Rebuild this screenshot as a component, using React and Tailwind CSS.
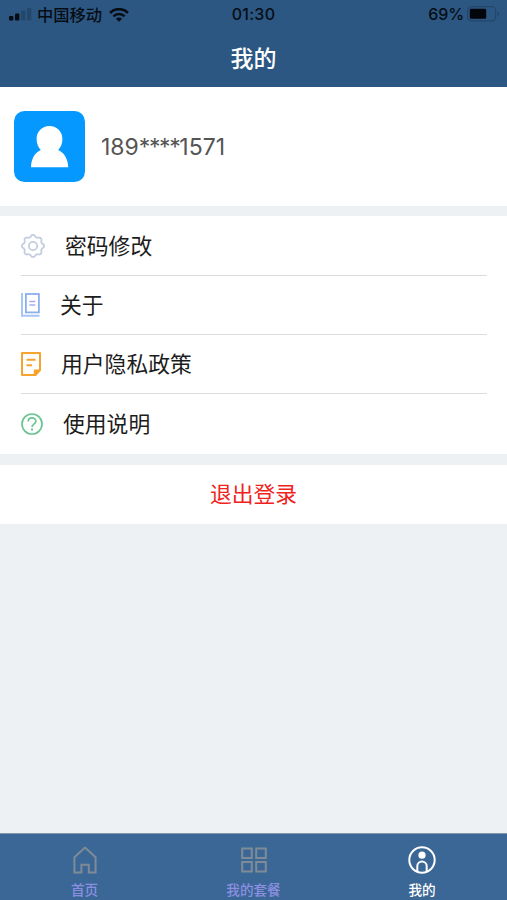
const FONT = "font-['Inter','Noto_Sans_CJK_SC',sans-serif]"

// Eight soft teeth round a 24px box
const GEAR_PATH =
  Array.from({ length: 97 }, (_, i) => {
    const a = (i / 96) * Math.PI * 2
    const wave = Math.cos(a * 8)
    const r = 10.1 + 0.95 * Math.sign(wave) * Math.pow(Math.abs(wave), 0.7)
    return `${i ? 'L' : 'M'}${(12 + r * Math.cos(a)).toFixed(2)} ${(12 + r * Math.sin(a)).toFixed(2)}`
  }).join('') + 'Z'

function SignalIcon() {
  return (
    <svg width="23" height="13" viewBox="0 0 23 13" fill="#070d14">
      <rect x="0" y="8" width="4.4" height="4.5" rx="1" />
      <rect x="6" y="5.5" width="4.4" height="7" rx="1" />
      <rect x="12" y="2.5" width="4.4" height="10" rx="1" opacity="0.2" />
      <rect x="18" y="0" width="4.4" height="12.5" rx="1" opacity="0.2" />
    </svg>
  )
}

function WifiIcon() {
  return (
    <svg width="20" height="14" viewBox="0 0 20 14" fill="none" stroke="#070d14">
      <path d="M1.1 4.9A12.6 12.6 0 0 1 18.9 4.9" strokeWidth="2.8" />
      <path d="M4.4 8.3A8 8 0 0 1 15.6 8.3" strokeWidth="2.5" />
      <path d="M10 13.8L6.9 10.7A4.4 4.4 0 0 1 13.1 10.7Z" fill="#070d14" stroke="none" />
    </svg>
  )
}

function BatteryIcon() {
  return (
    <svg width="33" height="16" viewBox="0 0 33 16">
      <rect x="0.7" y="0.7" width="28" height="14.2" rx="3.8" fill="none" stroke="#234669" strokeWidth="1.2" />
      <rect x="2.8" y="2.8" width="16.4" height="10" rx="1.2" fill="#02050a" />
      <path d="M30.5 5.4q2 .8 2 2.4t-2 2.4z" fill="#234669" />
    </svg>
  )
}

function Avatar() {
  return (
    <svg width="71" height="71" viewBox="0 0 71 71">
      <rect width="71" height="71" rx="10.5" fill="#0599ff" />
      <path
        d="M35.5 15C28 15 22.6 20.6 22.6 28c0 4.6 1.6 8.2 4.2 10.9C20.6 41.6 17 48.4 17 56.3h37.2c0-7.9-3.8-14.7-10-17.4 2.6-2.7 4.2-6.3 4.2-10.9C48.4 20.6 43 15 35.5 15z"
        fill="#fff"
      />
    </svg>
  )
}

function GearIcon() {
  return (
    <svg width="24" height="24" viewBox="0 0 24 24" fill="none" stroke="#c3cde0" strokeWidth="1.8" strokeLinejoin="round">
      <path d={GEAR_PATH} />
      <circle cx="12" cy="12" r="4.1" />
    </svg>
  )
}

function BookIcon() {
  return (
    <svg width="19" height="24" viewBox="0 0 19 24" fill="none">
      <path d="M1 0v22.7h17.5" stroke="#a6c4f4" strokeWidth="2" />
      <rect x="4.9" y="1" width="13" height="18.4" stroke="#8bb0ee" strokeWidth="1.8" />
      <path d="M8.3 8.5h6M8.3 12h6" stroke="#a6aef0" strokeWidth="1.4" />
    </svg>
  )
}

function NoteIcon() {
  return (
    <svg width="20" height="24" viewBox="0 0 20 24" fill="none" stroke="#f8a22f" strokeWidth="2" strokeLinejoin="round">
      <path d="M1 1h18v17l-4.500 5H1z" />
      <path d="M13.500 22.500v-4.300H19z" fill="#f8a22f" strokeWidth="1.400" />
      <path d="M5.500 7.800h9M5.500 13.200H11" strokeWidth="2" />
    </svg>
  )
}

function HelpIcon() {
  return (
    <svg width="22" height="22" viewBox="0 0 22 22" fill="none" stroke="#68c58e" strokeWidth="1.7">
      <circle cx="11" cy="11" r="10" />
      <path d="M7.200 8.600C7.200 6.300 8.900 4.900 11 4.900s3.900 1.400 3.900 3.400c0 2.700-3.900 2.900-3.900 5.700" />
      <path d="M11 15.400v2.100" strokeWidth="2" />
    </svg>
  )
}

function HomeIcon() {
  return (
    <svg width="24" height="28" viewBox="0 0 24 28" fill="none" stroke="#7f8b96" strokeWidth="2">
      <path d="M1.4 11.3 12 1.6l10.6 9.7v15.1h-6.8v-7.6H8.400v7.600h-7z" />
    </svg>
  )
}

function GridIcon() {
  return (
    <svg width="26" height="26" viewBox="0 0 26 26" fill="none" stroke="#7f8b96" strokeWidth="2">
      <rect x="1.2" y="1.5" width="9.6" height="9.5" />
      <rect x="15.2" y="1.5" width="9.6" height="9.5" />
      <rect x="1.2" y="15" width="9.6" height="9.5" />
      <rect x="15.2" y="15" width="9.6" height="9.5" />
    </svg>
  )
}

function MineIcon() {
  return (
    <svg width="28" height="28" viewBox="0 0 28 28" fill="none" stroke="#fff" strokeWidth="2">
      <circle cx="14" cy="14" r="12.7" />
      <circle cx="14" cy="9.2" r="3.6" fill="#fff" stroke="none" />
      <path d="M9.3 25.5v-5.3a4.7 4.7 0 0 1 9.4 0v5.3" />
    </svg>
  )
}

const MENU = [
  { label: '密码修改', Icon: GearIcon },
  { label: '关于', Icon: BookIcon },
  { label: '用户隐私政策', Icon: NoteIcon },
  { label: '使用说明', Icon: HelpIcon },
]

const TABS = [
  { label: '首页', Icon: HomeIcon, color: 'text-[#8c8fe0]' },
  { label: '我的套餐', Icon: GridIcon, color: 'text-[#8c8fe0]' },
  { label: '我的', Icon: MineIcon, color: 'text-white pr-px' },
]

function Header() {
  return (
    <header className="h-[87px] shrink-0 bg-[#2c5782]">
      <div className="grid h-7 grid-cols-3 items-center pr-[7px] pl-[9px] text-base font-medium text-[#070d14]">
        <div className="flex items-center pt-px">
          <SignalIcon />
          <span className="mr-[7px] ml-[5px] text-[16.3px] leading-6 whitespace-nowrap">中国移动</span>
          <WifiIcon />
        </div>
        <span className="pr-0.5 text-center tracking-[0.3px]">01:30</span>
        <div className="flex items-center justify-end gap-[3px]">
          <span className="tracking-[-0.1px]">69%</span>
          <BatteryIcon />
        </div>
      </div>
      <h1 className="flex h-[59px] items-center justify-center pt-[3px] text-[23px] font-medium text-white">我的</h1>
    </header>
  )
}

export default function App() {
  return (
    <div className={`flex h-[900px] w-[507px] flex-col overflow-hidden bg-[#edf1f4] ${FONT}`}>
      <Header />

      <section className="flex h-[119px] shrink-0 items-center gap-4 bg-white pl-3.5">
        <Avatar />
        <span className="pt-0.5 text-[23px] text-[#555]">
          189<span className="tracking-[-1.4px]">****</span>1571
        </span>
      </section>

      <ul className="mt-2.5 h-[238px] shrink-0 bg-white pt-px pr-5 pl-[21px]">
        {MENU.map(({ label, Icon }) => (
          <li
            key={label}
            className="flex h-[59.1px] items-center gap-5 border-b border-[#dcdcdf] text-[21.8px] text-[#1c1c1c] last:border-b-0"
          >
            <Icon />
            <span className="pt-px">{label}</span>
          </li>
        ))}
      </ul>

      <button className="mt-[11px] h-[59px] shrink-0 bg-white text-[21.8px] text-[#f0231c]">退出登录</button>

      <nav className="mt-auto grid h-[67px] shrink-0 grid-cols-3 border-t border-[#8097a8] bg-[#3b6796]">
        {TABS.map(({ label, Icon, color }) => (
          <a key={label} className={`flex flex-col items-center pt-3 text-[13.6px] leading-5 font-medium ${color}`}>
            <span className="flex h-7 items-center">
              <Icon />
            </span>
            <span className="mt-[5.5px]">{label}</span>
          </a>
        ))}
      </nav>
    </div>
  )
}
